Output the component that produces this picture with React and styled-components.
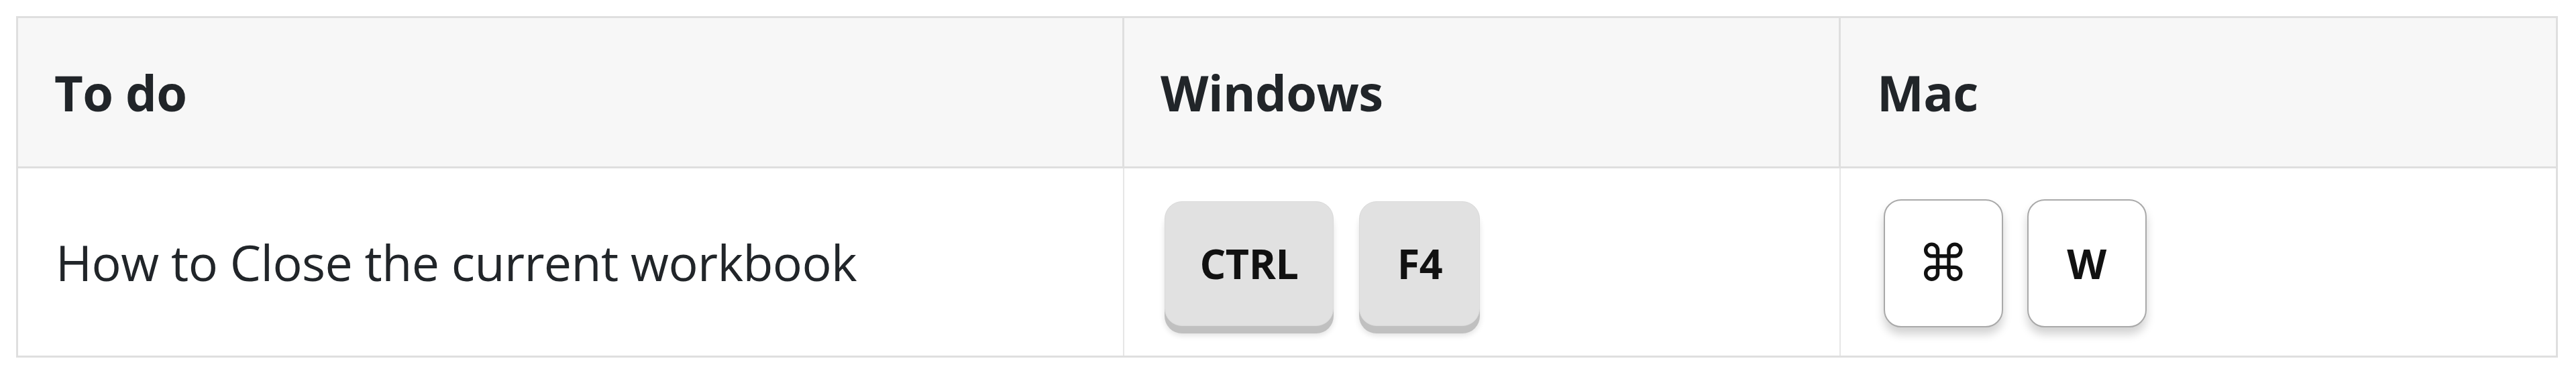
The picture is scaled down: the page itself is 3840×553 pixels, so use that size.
import styled, { createGlobalStyle } from 'styled-components';

const GlobalStyle = createGlobalStyle`
  body {
    margin: 0;
    background: #ffffff;
    font-family: "Open Sans", "Noto Sans", "Liberation Sans", sans-serif;
    color: #212529;
  }
`;

const Page = styled.div`
  padding: 24px 27px 0 24px;
`;

const Table = styled.table`
  width: 100%;
  border-collapse: collapse;
  border: 3px solid #dfdfdf;
  table-layout: fixed;
`;

const HeadRow = styled.tr`
  height: 224px;
  background: #f7f7f7;
`;

const BodyRow = styled.tr`
  height: 282px;
  background: #ffffff;
`;

const HeadCell = styled.th`
  width: ${(p) => p.$width};
  text-align: left;
  font-weight: 700;
  font-size: 74px;
  padding: 0 0 0 54px;
  border: 3px solid #dfdfdf;
  border-top: none;
  vertical-align: middle;
  letter-spacing: -0.6px;
`;

const Cell = styled.td`
  font-size: 73.5px;
  font-weight: 400;
  padding: 0 0 0 56px;
  border-left: 2px solid #e6e6e6;
  vertical-align: middle;
  letter-spacing: -0.6px;
`;

const KeyGroup = styled.div`
  display: flex;
  align-items: center;
  gap: ${(p) => p.$gap || '38px'};
  padding-left: ${(p) => p.$indent || '4px'};
  padding-top: 4px;
`;

const Key = styled.kbd`
  display: inline-flex;
  align-items: center;
  justify-content: center;
  box-sizing: border-box;
  font-family: ${(p) => (p.$glyph ? '"DejaVu Sans", sans-serif' : '"Open Sans", "Liberation Sans", sans-serif')};
  font-weight: ${(p) => (p.$glyph ? 400 : 700)};
  font-size: ${(p) => (p.$glyph ? '76px' : '61px')};
  letter-spacing: -0.5px;
  color: #111;
  height: ${(p) => (p.$mac ? '191px' : '186px')};
  min-width: ${(p) => (p.$mac ? '178px' : '180px')};
  padding: 0 ${(p) => (p.$mac ? '40px' : '52px')};
  border-radius: 26px;
  background: ${(p) => (p.$mac ? '#ffffff' : '#e1e1e1')};
  border: ${(p) => (p.$mac ? '2px solid #a9a9a9' : '1px solid #dadada')};
  box-shadow: ${(p) =>
    p.$mac
      ? '0 10px 14px rgba(0, 0, 0, 0.18)'
      : '0 11px 0 #c0c0c0, 0 14px 8px rgba(0, 0, 0, 0.12)'};
`;

const rows = [
  {
    task: 'How to Close the current workbook',
    windows: ['CTRL', 'F4'],
    mac: ['⌘', 'W'],
  },
];

const App = () => {
  return (
    <Page>
      <GlobalStyle />
      <Table>
        <thead>
          <HeadRow>
            <HeadCell $width="1592px">To do</HeadCell>
            <HeadCell $width="1011px">Windows</HeadCell>
            <HeadCell>Mac</HeadCell>
          </HeadRow>
        </thead>
        <tbody>
          {rows.map((row) => (
            <BodyRow key={row.task}>
              <Cell>{row.task}</Cell>
              <Cell>
                <KeyGroup>
                  {row.windows.map((k) => (
                    <Key key={k}>{k}</Key>
                  ))}
                </KeyGroup>
              </Cell>
              <Cell>
                <KeyGroup $indent="8px" $gap="36px">
                  {row.mac.map((k) => (
                    <Key key={k} $mac $glyph={k === '⌘'}>
                      {k}
                    </Key>
                  ))}
                </KeyGroup>
              </Cell>
            </BodyRow>
          ))}
        </tbody>
      </Table>
    </Page>
  );
};

export default App;
